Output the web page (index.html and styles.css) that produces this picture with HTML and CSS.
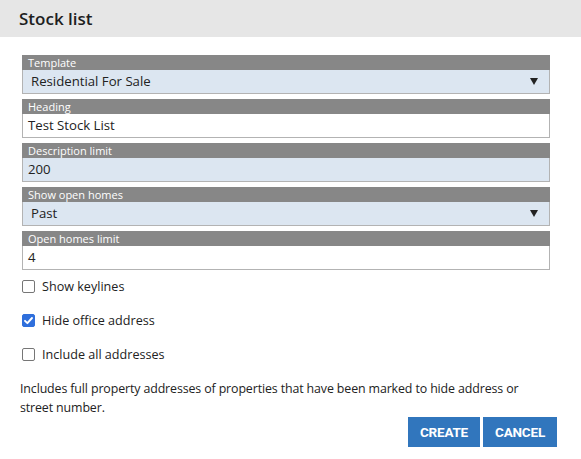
FILE: index.html
```html
<!DOCTYPE html>
<html>
<head>
<meta charset="utf-8">
<link rel="stylesheet" href="styles.css">
</head>
<body>
<div class="dialog">
  <header class="title">Stock list</header>
  <div class="content">
    <div class="fields">
      <div class="field">
        <div class="label">Template</div>
        <div class="input select">Residential For Sale<span class="arrow"></span></div>
      </div>
      <div class="field">
        <div class="label">Heading</div>
        <div class="input">Test Stock List</div>
      </div>
      <div class="field">
        <div class="label">Description limit</div>
        <div class="input blue">200</div>
      </div>
      <div class="field">
        <div class="label">Show open homes</div>
        <div class="input select">Past<span class="arrow"></span></div>
      </div>
      <div class="field">
        <div class="label">Open homes limit</div>
        <div class="input">4</div>
      </div>
    </div>
    <div class="checks">
      <label class="check"><span class="box"></span>Show keylines</label>
      <label class="check"><span class="box checked"><svg viewBox="0 0 13 13" width="13" height="13"><path d="M3 6.8 L5.4 9.2 L10 4" fill="none" stroke="#fff" stroke-width="1.9" stroke-linecap="round" stroke-linejoin="round"/></svg></span>Hide office address</label>
      <label class="check"><span class="box"></span>Include all addresses</label>
    </div>
    <p class="note">Includes full property addresses of properties that have been marked to hide address or street number.</p>
    <div class="actions">
      <button class="btn">CREATE</button>
      <button class="btn">CANCEL</button>
    </div>
  </div>
</div>
</body>
</html>
```
FILE: styles.css
```css
* { box-sizing: border-box; }
body {
  margin: 0;
  background: #fff;
  font-family: "Open Sans", "Noto Sans", sans-serif;
  color: #222;
}
.dialog { width: 581px; height: 459px; }
.title {
  height: 37px;
  background: #e6e6e6;
  padding-left: 19px;
  font-size: 17px;
  font-weight: 600;
  line-height: 37px;
  color: #1e1e1e;
}
.content {
  padding: 18px 31px 0 22px;
}
.fields {
  display: flex;
  flex-direction: column;
  gap: 5px;
}
.field { display: flex; flex-direction: column; }
.label {
  height: 15px;
  background: #878787;
  color: #fff;
  font-size: 11px;
  line-height: 15px;
  padding-left: 6px;
}
.input {
  height: 24px;
  border: 1px solid #b3b3b3;
  border-top: none;
  background: #fff;
  font-size: 13.2px;
  line-height: 22px;
  padding-left: 5px;
  position: relative;
}
.input.blue { background: #dce6f1; }
.input.select { background: #dce6f1; padding-left: 8px; }
.arrow {
  position: absolute;
  right: 11px;
  top: 8px;
  width: 0; height: 0;
  border-left: 4px solid transparent;
  border-right: 4px solid transparent;
  border-top: 7px solid #222;
}
.checks {
  display: flex;
  flex-direction: column;
  gap: 21px;
  margin-top: 10px;
}
.check {
  display: flex;
  align-items: center;
  gap: 7px;
  font-size: 12.6px;
  height: 13px;
  line-height: 13px;
  color: #222;
}
.box {
  width: 13px; height: 13px;
  border: 1px solid #767676;
  border-radius: 2px;
  background: #fff;
  display: flex;
}
.box.checked {
  background: #2f6fdc;
  border-color: #2f6fdc;
}
.box.checked svg { margin: -1px; }
.note {
  margin: 18px 0 0 -2px;
  font-size: 12.4px;
  letter-spacing: -0.12px;
  line-height: 19px;
  color: #222;
}
.actions {
  display: flex;
  justify-content: flex-end;
  gap: 3px;
  margin-top: 0;
  margin-right: -7px;
}
.btn {
  height: 30px;
  border: none;
  background: #3176bd;
  color: #fff;
  font-family: Roboto, "Liberation Sans", sans-serif;
  font-weight: 700;
  font-size: 13.5px;
  padding: 0 12px;
  letter-spacing: -0.2px;
}
```
